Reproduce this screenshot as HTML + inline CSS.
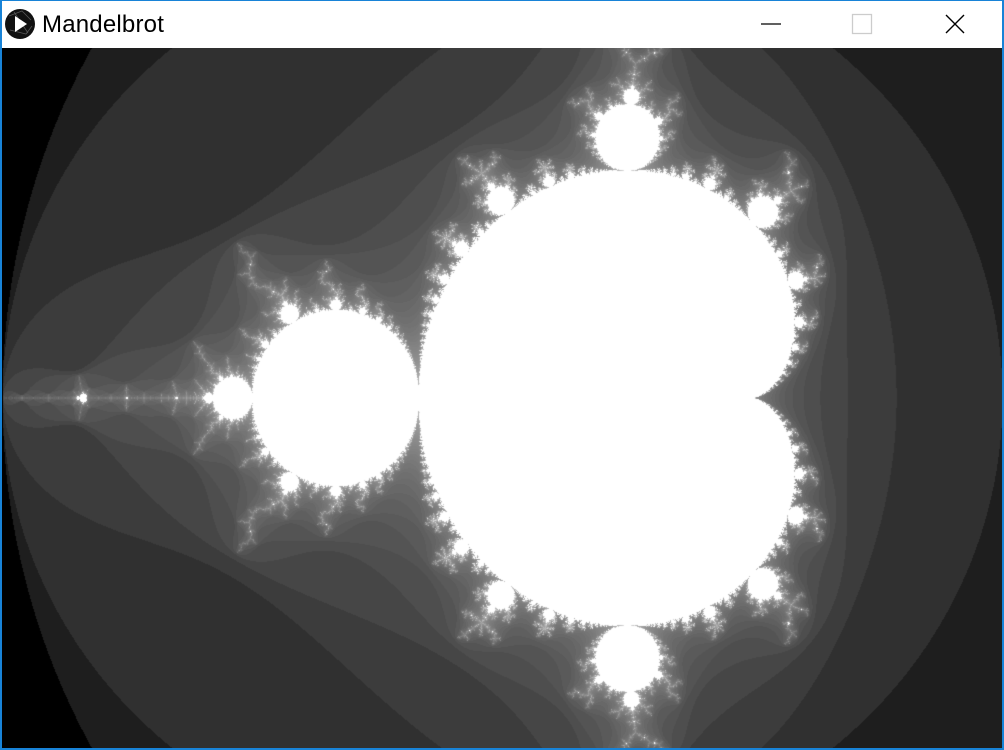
<!DOCTYPE html>
<html><head><meta charset="utf-8"><style>
html,body{margin:0;padding:0;background:#fff;width:1004px;height:750px;overflow:hidden}
#win{position:absolute;left:0;top:0;border:1px solid #1883d7;border-left-width:2px;border-bottom-width:2px;border-right-width:2px;box-sizing:border-box;width:1004px;height:750px}
#title{position:absolute;left:42px;top:11px;font:24px "Liberation Sans",sans-serif;color:#000;letter-spacing:0.2px}
canvas{position:absolute;left:2px;top:48px}
</style></head><body>
<div id="win"></div>
<svg style="position:absolute;left:0;top:0" width="1004" height="48">
<circle cx="20" cy="24" r="15" fill="#111"/>
<path d="M9 16 L22 11 L31 20 M10 30 L26 34 L32 26 M14 12 L28 33" stroke="#555" stroke-width="0.8" fill="none"/>
<path d="M15 16 L27 24 L15 32 Z" fill="#fff"/>
<line x1="761" y1="24" x2="781" y2="24" stroke="#000" stroke-width="1.3"/>
<rect x="852.5" y="14.5" width="19" height="19" fill="none" stroke="#ccc" stroke-width="1.3"/>
<path d="M946 15 L964 33 M964 15 L946 33" stroke="#000" stroke-width="1.4"/>
</svg>
<div id="title">Mandelbrot</div>
<canvas id="c" width="1000" height="700"></canvas>
<script>
var cv=document.getElementById('c'),ctx=cv.getContext('2d');
var W=1000,H=700,img=ctx.createImageData(W,H),d=img.data;
var MAX=200,L=Math.log(361);
for(var y=0;y<H;y++){var ci=(349.5-y)/350;
for(var x=0;x<W;x++){var cr=-2+x*3/W;
var a=cr,b=ci,n=0;
while(n<MAX){if(a*a+b*b>4)break;var t=a*a-b*b+cr;b=2*a*b+ci;a=t;n++;}
var g;if(n>=MAX)g=255;else{g=255*Math.log(n+1)/L;if(g>255)g=255;}
var i=(y*W+x)*4;d[i]=d[i+1]=d[i+2]=g;d[i+3]=255;}}
ctx.putImageData(img,0,0);
</script>
</body></html>
